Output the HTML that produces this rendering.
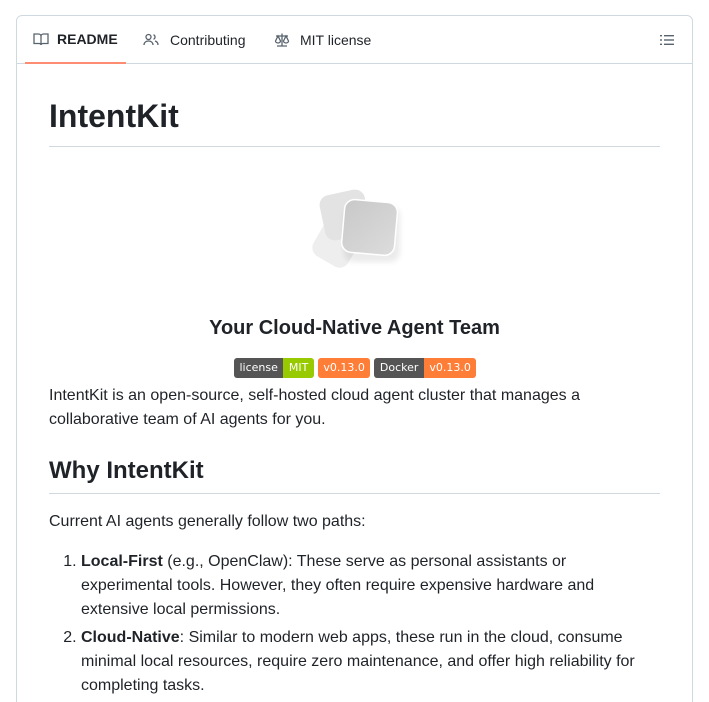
<!DOCTYPE html>
<html style="height:702px;overflow:hidden"><head><style>
*{box-sizing:border-box;margin:0;padding:0}
body{width:709px;height:702px;background:#fff;font-family:"Liberation Sans",sans-serif;color:#1f2328;overflow:hidden;position:relative}
.card{position:absolute;left:16px;top:15px;width:677px;height:720px;border:1px solid #d1d9e0;border-radius:6px}
.tabs{height:48px;border-bottom:1px solid #d1d9e0;position:relative}
.tab{position:absolute;top:0;height:48px;display:flex;align-items:center;font-size:14px;color:#1f2328}
.tab svg{margin-right:8px}
.sel{border-bottom:2px solid #fd8c73;font-weight:bold}
.c{position:absolute;left:32px;width:611px}
h1{font-size:32px;font-weight:bold;position:absolute;left:32px;top:82px;width:611px;height:49px;border-bottom:1px solid #d1d9e0}
h2{font-size:24px;font-weight:bold}
p,li{font-size:16px;line-height:24px}
.b{display:inline-flex;height:20px;font-size:11px;color:#fff;border-radius:3px;overflow:hidden;font-family:"DejaVu Sans",sans-serif;line-height:20px}
.b span{padding:0 5.5px}
</style></head><body>
<div class="card">
<div class="tabs">
<div class="tab sel" style="left:8px;width:101px;padding-left:8px"><svg width="16" height="16" viewBox="0 0 16 16" fill="none" stroke="#59636e" stroke-width="1.3"><path d="M1 3h4.5c1.4 0 2.5 1 2.5 2.3V14c0-.8-.8-1.5-2-1.5H1zM15 3h-4.5C9.1 3 8 4 8 5.3V14c0-.8.8-1.5 2-1.5h5z"/></svg>README</div>
<div class="tab" style="left:126px"><svg width="16" height="16" viewBox="0 0 16 16" fill="none" stroke="#59636e" stroke-width="1.3" style="margin-right:11px"><circle cx="5.5" cy="5" r="2.5"/><path d="M1 13c0-2.5 2-4 4.5-4S10 10.5 10 13M10.5 2.7a2.5 2.5 0 010 4.6M12 9c1.8.5 3 2 3 4"/></svg>Contributing</div>
<div class="tab" style="left:257px"><svg width="16" height="16" viewBox="0 0 16 16" fill="none" stroke="#59636e" stroke-width="1.3" style="margin-right:10px"><path d="M8 1.5v12M3 14h10M2 4h12M4 4l-2.5 5a2.5 2 0 005 0zM12 4l-2.5 5a2.5 2 0 005 0z"/></svg>MIT license</div>
<svg style="position:absolute;right:17px;top:16px" width="16" height="16" viewBox="0 0 16 16" fill="#59636e"><rect x="1" y="3" width="2" height="1.4"/><rect x="5" y="3" width="10" height="1.4"/><rect x="1" y="7.3" width="2" height="1.4"/><rect x="5" y="7.3" width="10" height="1.4"/><rect x="1" y="11.6" width="2" height="1.4"/><rect x="5" y="11.6" width="10" height="1.4"/></svg>
</div>
<h1>IntentKit</h1>
<svg style="position:absolute;left:285px;top:168px" width="110" height="100" viewBox="0 0 110 100">
<defs><filter id="s"><feGaussianBlur stdDeviation="3"/></filter>
<linearGradient id="g" x1="0" y1="0" x2="1" y2="1"><stop offset="0" stop-color="#c8c8c8"/><stop offset="1" stop-color="#dcdcdc"/></linearGradient></defs>
<rect x="14" y="40" width="40" height="40" rx="10" fill="#eee" transform="rotate(30 34 60)"/>
<rect x="20" y="8" width="46" height="46" rx="10" fill="#e3e3e3" transform="rotate(-12 43 31)"/>
<rect x="42" y="22" width="56" height="56" rx="10" fill="#000" opacity=".08" filter="url(#s)"/>
<rect x="41" y="17" width="53" height="53" rx="10" fill="url(#g)" stroke="#fff" stroke-width="1.5" transform="rotate(5 68 44)"/>
</svg>
<div class="c" style="top:301px;text-align:center;font-size:20px;font-weight:bold">Your Cloud-Native Agent Team</div>
<div style="position:absolute;left:217px;top:342px;display:flex;gap:4px">
<div class="b"><span style="background:#555">license</span><span style="background:#97ca00">MIT</span></div>
<div class="b"><span style="background:#fe7d37">v0.13.0</span></div>
<div class="b"><span style="background:#555">Docker</span><span style="background:#fe7d37">v0.13.0</span></div>
</div>
<p class="c" style="top:368px">IntentKit is an open-source, self-hosted cloud agent cluster that manages a collaborative team of AI agents for you.</p>
<h2 class="c" style="top:441px;height:37px;border-bottom:1px solid #d1d9e0">Why IntentKit</h2>
<p class="c" style="top:494px">Current AI agents generally follow two paths:</p>
<ol class="c" style="top:534px;padding-left:32px">
<li><b>Local-First</b> (e.g., OpenClaw): These serve as personal assistants or experimental tools. However, they often require expensive hardware and extensive local permissions.</li>
<li style="margin-top:4px"><b>Cloud-Native</b>: Similar to modern web apps, these run in the cloud, consume minimal local resources, require zero maintenance, and offer high reliability for completing tasks.</li>
</ol>
</div>
</body></html>
